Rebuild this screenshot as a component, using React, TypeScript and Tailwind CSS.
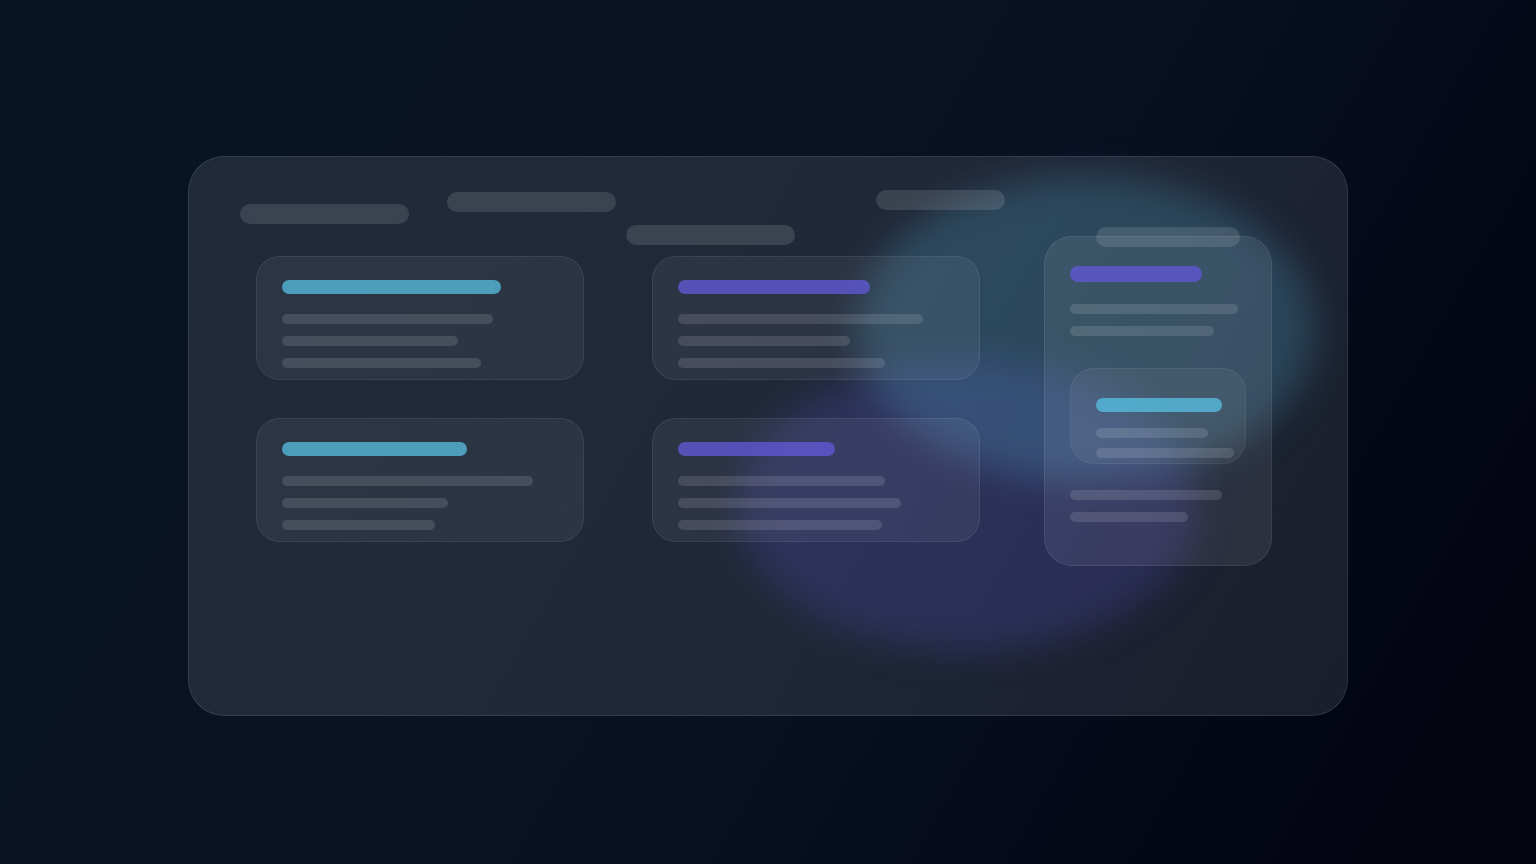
import React from "react";
import clsx from "clsx";

type BarProps = {
  tone: "cyan" | "violet";
  className: string;
};

type CardProps = {
  tone: "cyan" | "violet";
  title: string;
  lines: string[];
};

const Bar = ({ tone, className }: BarProps) => {
  return (
    <div
      className={clsx(
        "rounded-full",
        tone === "cyan" ? "bg-[#58c6e8]/73" : "bg-[#5f57d3]/80",
        className
      )}
    ></div>
  );
};

const Line = ({ className }: { className: string }) => {
  return <div className={clsx("h-2.5 rounded-full bg-[#fafaff]/13", className)}></div>;
};

const Card = ({ tone, title, lines }: CardProps) => {
  return (
    <div className="rounded-3xl border border-white/8 bg-[#f0ecff]/6 px-[25px] pt-[23px] pb-[11px]">
      <Bar tone={tone} className={clsx("h-3.5", title)} />
      <div className="mt-5 flex flex-col gap-3">
        {lines.map((width) => (
          <Line key={width} className={width} />
        ))}
      </div>
    </div>
  );
};

const pills = [
  "mt-12 w-[169px]",
  "mt-9 ml-[38px] w-[169px]",
  "mt-[69px] ml-2.5 w-[169px]",
  "mt-[34px] ml-[81px] w-[129px]",
  "mt-[71px] ml-[91px] w-36",
];

const cards: CardProps[] = [
  { tone: "cyan", title: "w-[219px]", lines: ["w-[211px]", "w-44", "w-[199px]"] },
  { tone: "violet", title: "w-48", lines: ["w-[245px]", "w-[172px]", "w-[207px]"] },
  { tone: "cyan", title: "w-[185px]", lines: ["w-[251px]", "w-[166px]", "w-[153px]"] },
  { tone: "violet", title: "w-[157px]", lines: ["w-[207px]", "w-[223px]", "w-[204px]"] },
];

const Sidebar = () => {
  return (
    <aside className="-mt-5 w-[228px] rounded-[28px] border border-white/8 bg-[#f4f2ff]/8 px-[25px] pt-[29px] pb-[43px]">
      <Bar tone="violet" className="h-4 w-33" />
      <div className="mt-[22px] flex flex-col gap-3">
        <Line className="w-42" />
        <Line className="w-36" />
      </div>
      <div className="mt-8 rounded-3xl border border-white/6 bg-white/5 pt-[29px] pb-[5px] pl-[25px]">
        <Bar tone="cyan" className="h-3.5 w-[126px]" />
        <div className="mt-4 flex flex-col gap-2.5">
          <Line className="w-28" />
          <Line className="w-[138px]" />
        </div>
      </div>
      <div className="mt-[26px] flex flex-col gap-3">
        <Line className="w-38" />
        <Line className="w-[118px]" />
      </div>
    </aside>
  );
};

const App = () => {
  return (
    <main className="min-h-screen bg-[linear-gradient(120deg,#081424_0%,#091323_32%,#0b1223_42%,#081021_58%,#040a19_74%,#030612_88%,#02040f_100%)] px-[188px] pt-[156px] pb-[148px]">
      <div className="relative rounded-[36px] border border-white/10 bg-[#ebfaff]/10 pb-[149px]">
        {/* soft glows behind the cards */}
        <div className="absolute top-[204px] left-[549px] h-[290px] w-[460px] rounded-[50%] bg-[#6259da]/21 blur-[18px]"></div>
        <div className="absolute top-[19px] left-[667px] h-[306px] w-[460px] rounded-[50%] bg-[#60c4ea]/21 blur-[18px]"></div>

        <div className="relative">
          <div className="-mt-px flex h-[100px] items-start pl-[51px]">
            {pills.map((pill) => (
              <div key={pill} className={clsx("h-5 rounded-full bg-white/12", pill)}></div>
            ))}
          </div>
          <div className="flex items-start gap-16 pr-[75px] pl-[67px]">
            <div className="grid grow grid-cols-2 gap-x-[68px] gap-y-[38px]">
              {cards.map((card) => (
                <Card key={card.title} {...card} />
              ))}
            </div>
            <Sidebar />
          </div>
        </div>
      </div>
    </main>
  );
};

export default App;
